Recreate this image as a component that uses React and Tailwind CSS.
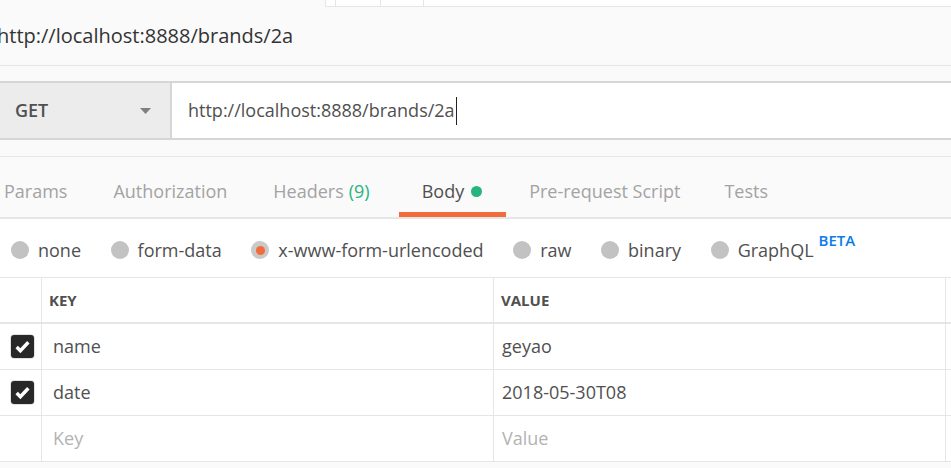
import React from "react";

function Tab({ label, active, extra, cls = "px-[23px]", outer = "" }) {
  return (
    <div className={`flex flex-col justify-end ${outer}`}>
      <div className={`mb-[9px] flex items-center leading-[24px] ${cls} ${active ? "text-[#505050]" : "text-[#a3a3a3]"}`}>
        <span>{label}</span>
        {extra}
      </div>
      <div className={`h-[5px] ${active ? "bg-[#f26b3a]" : "bg-transparent"}`} />
    </div>
  );
}

function Radio({ label, selected, children }) {
  return (
    <div className="flex items-center">
      {selected ? (
        <span className="flex h-[18px] w-[18px] items-center justify-center rounded-full bg-[#c9c9c9]">
          <span className="h-[9px] w-[9px] rounded-full bg-[#f26b3a]" />
        </span>
      ) : (
        <span className="h-[18px] w-[18px] rounded-full bg-[#c2c2c2]" />
      )}
      <span className="ml-[9px] leading-[24px] text-[#505050]">
        {label}
        {children}
      </span>
    </div>
  );
}

function Check() {
  return (
    <div className="ml-[10px] flex h-[25px] w-[25px] items-center justify-center rounded-[4px] border border-[#e2e2e2] bg-white">
      <div className="flex h-[23px] w-[23px] items-center justify-center rounded-[3px] bg-[#282828]">
        <svg width="17" height="17" viewBox="0 0 16 16">
          <path d="M2.5 8.5 L6 12 L13.5 4" fill="none" stroke="#ffffff" strokeWidth="3.2" strokeLinecap="butt" strokeLinejoin="miter" />
        </svg>
      </div>
    </div>
  );
}

function Row({ checked, k, v, placeholder }) {
  return (
    <div className="grid h-[46px] grid-cols-[42px_452px_452px_5px] border-b border-[#e6e6e6]">
      <div className="flex items-center border-r border-[#e6e6e6]">{checked && <Check />}</div>
      <div className={`flex items-center border-r border-[#e6e6e6] pl-[11px] ${placeholder ? "text-[#b3b3b3]" : "text-[#505050]"}`}>{k}</div>
      <div className={`flex items-center border-r border-[#e6e6e6] pl-[8px] ${placeholder ? "text-[#b3b3b3]" : "text-[#505050]"}`}>{v}</div>
      <div />
    </div>
  );
}

export default function App() {
  return (
    <div className="h-[468px] w-[951px] overflow-hidden bg-[#fafafa] font-['Open_Sans',sans-serif] text-[18px]">
      {/* top strip */}
      <div className="flex h-[7px]">
        <div className="w-[325px]" />
        <div className="flex flex-1 border-b border-l border-[#e6e6e6] bg-white">
          <div className="w-[10px] border-r border-[#e6e6e6]" />
          <div className="w-[45px] border-r border-[#e6e6e6]" />
          <div className="w-[43px] border-r border-[#e6e6e6]" />
        </div>
      </div>

      {/* title */}
      <div className="flex h-[59px] items-center border-b border-[#e6e6e6]">
        <span className="ml-[-3px] text-[20px] text-[#333333]">http://localhost:8888/brands/2a</span>
      </div>

      <div className="h-[15px]" />

      {/* url bar */}
      <div className="flex h-[59px] border-y-2 border-[#d6d6d6]">
        <div className="flex w-[172px] items-center justify-between border-r-2 border-[#d6d6d6] bg-[#ececec] pl-[15px] pr-[19px]">
          <span className="font-semibold text-[#505050]">GET</span>
          <svg width="11" height="6" viewBox="0 0 11 6">
            <path d="M0 0 H11 L5.5 6 Z" fill="#808080" />
          </svg>
        </div>
        <div className="flex flex-1 items-center bg-white pl-[16px] text-[#505050]">
          <span>http://localhost:8888/brands/2a</span>
          <span className="ml-[1px] h-[28px] w-[1px] bg-[#222222]" />
        </div>
      </div>

      <div className="h-[16px]" />

      {/* tabs */}
      <div className="flex h-[63px] border-b-2 border-t border-[#e6e6e6]">
        <div className="ml-[-19px] flex">
          <Tab label="Params" />
          <Tab label="Authorization" />
          <Tab label="Headers" extra={<span className="ml-[5px] text-[#26b47f]">(9)</span>} />
          <Tab
            label="Body"
            active
            outer="ml-[6px]"
            cls="pl-[23px] pr-[24px]"
            extra={<span className="ml-[7px] h-[11px] w-[11px] rounded-full bg-[#26b47f]" />}
          />
          <Tab label="Pre-request Script" />
          <Tab label="Tests" cls="pl-[21px] pr-[23px]" />
        </div>
      </div>

      {/* body types */}
      <div className="flex h-[58px] items-center gap-[29.6px] bg-white pl-[11px] pt-[4px]">
        <Radio label="none" />
        <Radio label="form-data" />
        <Radio label="x-www-form-urlencoded" selected />
        <Radio label="raw" />
        <Radio label="binary" />
        <Radio label="GraphQL">
          <span className="relative top-[-11px] ml-[5px] text-[15px] font-semibold leading-none text-[#097bed]">BETA</span>
        </Radio>
      </div>

      {/* table */}
      <div className="border-t border-[#e6e6e6] bg-white">
        <div className="grid h-[46px] grid-cols-[42px_452px_452px_5px] border-b-2 border-[#e6e6e6]">
          <div className="border-r border-[#e6e6e6]" />
          <div className="flex items-center border-r border-[#e6e6e6] pl-[7px] text-[15px] font-bold text-[#505050]">KEY</div>
          <div className="flex items-center border-r border-[#e6e6e6] pl-[7px] text-[15px] font-bold text-[#505050]">VALUE</div>
          <div />
        </div>
        <Row checked k="name" v="geyao" />
        <Row checked k="date" v="2018-05-30T08" />
        <Row k="Key" v="Value" placeholder />
      </div>
    </div>
  );
}
